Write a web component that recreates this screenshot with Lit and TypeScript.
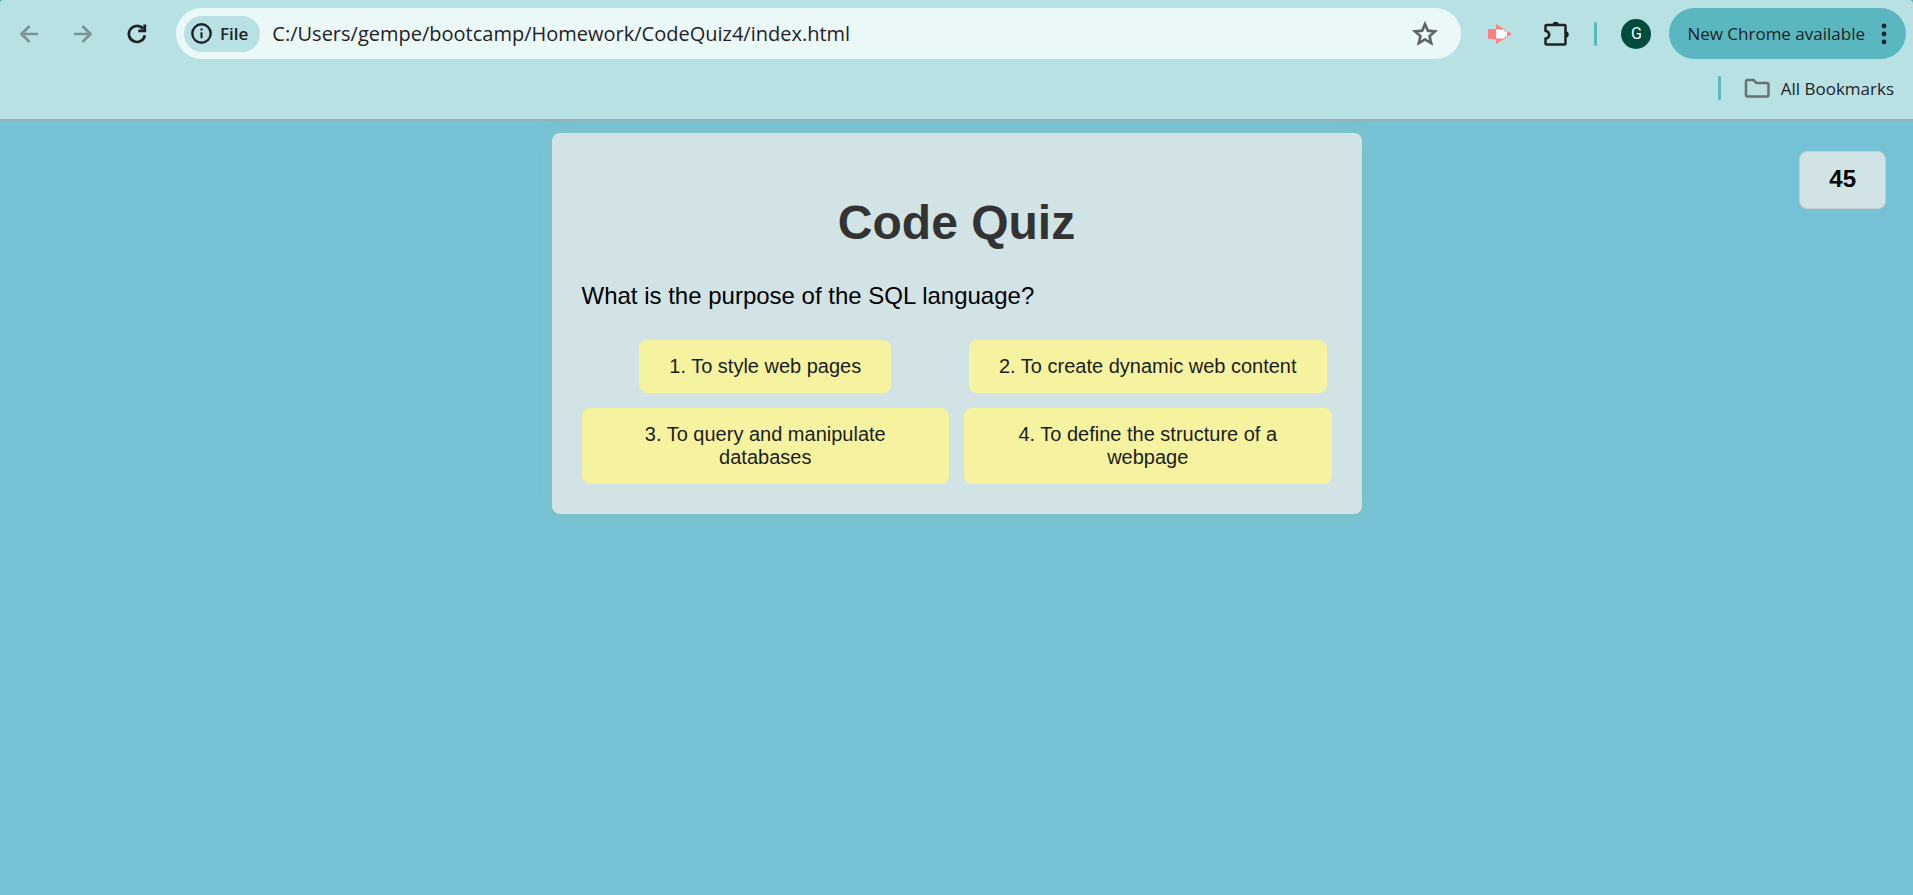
import { LitElement, html, css, svg } from "lit";
import { customElement, property, state } from "lit/decorators.js";

const icons = {
  back: svg`<path d="M19 10H3M10.500 2 2.500 10l8 8" fill="none" stroke="currentColor" stroke-width="2.600"/>`,
  forward: svg`<path d="M1 10h16M9.500 2 17.500 10l-8 8" fill="none" stroke="currentColor" stroke-width="2.600"/>`,
  reload: svg`<path d="M17.800 11.200A8 8 0 1 1 16 4.800" fill="none" stroke="currentColor" stroke-width="2.700"/><path d="M19.200 .5V8.200h-7.900V5.500h5V.5z" fill="currentColor"/>`,
};

@customElement("browser-bar")
export class BrowserBar extends LitElement {
  @property() url = "";

  static styles = css`
    :host {
      display: block;
      background: #5ab7c0;
      font-family: "Open Sans", "Noto Sans", sans-serif;
      color: #1f2225;
    }
    .chrome {
      background: #b8e1e4;
      border-bottom: 2px solid #95b3b5;
      border-radius: 4px 4px 0 0;
      padding: 8px 7px 0 2px;
    }
    button {
      border: 0;
      padding: 0;
      background: none;
      color: inherit;
      font: inherit;
      display: flex;
      align-items: center;
      justify-content: center;
      cursor: pointer;
    }
    .row {
      display: flex;
      align-items: center;
      height: 51px;
    }
    .nav {
      width: 54px;
      height: 48px;
    }
    .nav:disabled {
      color: #7a9496;
    }
    .address {
      flex: 1;
      min-width: 0;
      height: 51px;
      box-sizing: border-box;
      display: flex;
      align-items: center;
      margin: 0 11px 0 12px;
      padding: 0 21px 0 8px;
      border-radius: 26px;
      background: #ebf8f8;
    }
    .chip {
      flex: none;
      height: 36px;
      padding: 0 12px 0 7px;
      gap: 8px;
      border-radius: 18px;
      background: #b8e1e4;
      font-size: 17px;
      font-weight: 600;
    }
    .url {
      flex: 1;
      min-width: 0;
      border: 0;
      outline: 0;
      padding: 0 0 0 12px;
      background: none;
      color: inherit;
      font: 20px/28px "Open Sans", "Noto Sans", sans-serif;
    }
    .star {
      color: #5b6163;
    }
    .tool {
      width: 56px;
      height: 48px;
    }
    .divider {
      width: 3px;
      height: 24px;
      border-radius: 2px;
      background: #5ab7c0;
    }
    .divider.tools {
      margin: 0 24px 0 10px;
    }
    .avatar {
      width: 30px;
      height: 30px;
      border-radius: 50%;
      background: #004d40;
      color: #fff;
      font: 16px/30px Roboto, sans-serif;
      margin-right: 18px;
    }
    .update {
      height: 51px;
      gap: 16px;
      padding: 0 19px 0 18px;
      border-radius: 26px;
      background: #5ab7c0;
      font-size: 17px;
    }
    .bookmarks {
      display: flex;
      align-items: center;
      justify-content: flex-end;
      height: 58px;
      padding: 0 12px 2px 0;
      gap: 23px;
    }
    .all {
      gap: 11px;
      font-size: 17px;
    }
  `;

  render() {
    return html`
      <header class="chrome">
        <div class="row">
          <button class="nav" aria-label="Back" disabled>
            <svg width="20" height="20" viewBox="0 0 20 20">${icons.back}</svg>
          </button>
          <button class="nav" aria-label="Forward" disabled>
            <svg width="20" height="20" viewBox="0 0 20 20">${icons.forward}</svg>
          </button>
          <button class="nav" aria-label="Reload">
            <svg width="20" height="20" viewBox="0 0 20 20">${icons.reload}</svg>
          </button>
          <div class="address">
            <button class="chip">
              <svg width="21" height="21" viewBox="0 0 21 21">
                <circle cx="10.5" cy="10.5" r="9.2" fill="none" stroke="currentColor" stroke-width="2.4" />
                <path d="M9.500 9.300h2v6h-2zM9.500 5.500h2v2h-2z" fill="currentColor" />
              </svg>
              File
            </button>
            <input class="url" type="text" aria-label="Address" spellcheck="false" .value=${this.url} />
            <button class="star" aria-label="Bookmark this page">
              <svg width="30" height="30" viewBox="0 0 24 24">
                <path
                  fill="currentColor"
                  stroke="currentColor"
                  stroke-width=".5"
                  d="M22 9.240l-7.190-.62L12 2 9.190 8.630 2 9.240l5.460 4.730L5.820 21 12 17.270 18.180 21l-1.630-7.030L22 9.240zM12 15.400l-3.760 2.270 1-4.280-3.320-2.880 4.380-.38L12 6.100l1.710 4.040 4.380.38-3.320 2.880 1 4.280L12 15.400z"
                />
              </svg>
            </button>
          </div>
          <button class="tool" aria-label="Screen recorder">
            <svg width="24" height="20" viewBox="0 0 24 20">
              <path d="M1 5h7V0l16 10L8 20v-5H1q-1 0-1-1V6q0-1 1-1z" fill="#ff8080" />
              <path d="M8 5.500h7q2 0 2 2v1l2-2v7l-2-2v1q0 2-2 2H8z" fill="#fff" />
            </svg>
          </button>
          <button class="tool" aria-label="Extensions">
            <svg width="26" height="26" viewBox="0 0 26 26">
              <path
                d="M3.500 4h18q1 0 1 1v17.500q0 1-1 1H3.500q-1 0-1-1v-4.700c5-1.500 5-6.600 0-8V5q0-1 1-1z"
                fill="none"
                stroke="currentColor"
                stroke-width="2.5"
              />
              <path d="M9.500 4a3.200 3.200 0 0 1 6.400 0zM22.500 10.300a3.200 3.200 0 0 1 0 6.400z" fill="currentColor" />
            </svg>
          </button>
          <span class="divider tools"></span>
          <button class="avatar" aria-label="Profile G">G</button>
          <button class="update">
            New Chrome available
            <svg width="6" height="22" viewBox="0 0 6 22" fill="currentColor">
              <circle cx="3" cy="3" r="2.400" />
              <circle cx="3" cy="11" r="2.400" />
              <circle cx="3" cy="19" r="2.400" />
            </svg>
          </button>
        </div>
        <div class="bookmarks">
          <span class="divider"></span>
          <button class="all">
            <svg width="26" height="20" viewBox="0 0 26 20">
              <path
                d="M3.500 2h6l3 3h10.500q1.500 0 1.500 1.500v10.500q0 1.500-1.500 1.500H3.500q-1.500 0-1.500-1.500V3.500Q2 2 3.500 2z"
                fill="none"
                stroke="#6b6f71"
                stroke-width="2.500"
              />
            </svg>
            All Bookmarks
          </button>
        </div>
      </header>
    `;
  }
}

@customElement("quiz-card")
export class QuizCard extends LitElement {
  @property() question = "";
  @property({ attribute: false }) answers: string[] = [];

  static styles = css`
    :host {
      display: block;
      box-sizing: border-box;
      width: 100%;
      max-width: 810px;
      padding: 30px;
      border-radius: 8px;
      background: #d1e3e5;
      box-shadow: 0 0 15px #82c3b9;
    }
    .title {
      margin: 32px 0;
      color: #333;
      font-size: 48px;
      line-height: 55px;
      text-align: center;
    }
    .question {
      margin: 0 0 30px;
      font-size: 24px;
      font-weight: 400;
      line-height: 28px;
    }
    .answers {
      display: grid;
      grid-template-columns: 1fr 1fr;
      gap: 15px;
      justify-items: center;
    }
    .answer {
      padding: 15px 30px;
      border: 0;
      border-radius: 8px;
      background: #f5f3a0;
      color: #1c1c1c;
      font: inherit;
      font-size: 20px;
      line-height: 23px;
      cursor: pointer;
    }
  `;

  render() {
    return html`
      <h1 class="title">Code Quiz</h1>
      <p class="question">${this.question}</p>
      <div class="answers">
        ${this.answers.map((text, i) => html`<button class="answer">${i + 1}. ${text}</button>`)}
      </div>
    `;
  }
}

@customElement("app-root")
export class AppRoot extends LitElement {
  @state() private seconds = 45;

  static styles = css`
    :host {
      display: flex;
      flex-direction: column;
      min-height: 100vh;
      background: #75c1d6;
      color: #000;
      font-family: "Liberation Sans", Arial, sans-serif;
    }
    .page {
      flex: 1;
      position: relative;
      display: flex;
      align-items: flex-start;
      justify-content: center;
      padding: 12px;
      overflow: hidden;
    }
    .timer {
      position: absolute;
      top: 30px;
      right: 27px;
      padding: 14px 29px 16px;
      border: 1px solid #c6cccd;
      border-radius: 8px;
      background: #d1e3e5;
      font-size: 24px;
      font-weight: 700;
      line-height: 26px;
    }
  `;

  render() {
    return html`
      <browser-bar url="C:/Users/gempe/bootcamp/Homework/CodeQuiz4/index.html"></browser-bar>
      <main class="page">
        <quiz-card
          question="What is the purpose of the SQL language?"
          .answers=${[
            "To style web pages",
            "To create dynamic web content",
            "To query and manipulate databases",
            "To define the structure of a webpage",
          ]}
        ></quiz-card>
        <div class="timer" role="timer">${this.seconds}</div>
      </main>
    `;
  }
}
